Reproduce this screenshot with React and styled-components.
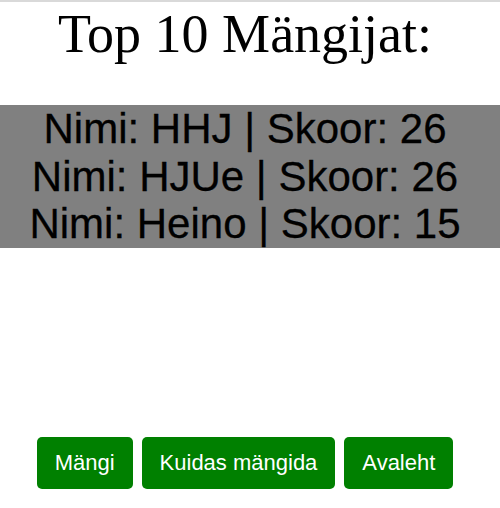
import React from "react";
import styled, { createGlobalStyle } from "styled-components";

const Global = createGlobalStyle`
  html, body { margin: 0; padding: 0; background: #ffffff; }
  body { border-top: 2px solid #d9d9d9; }
`;

const Page = styled.div`
  display: flex;
  flex-direction: column;
  width: 500px;
  min-height: 506px;
`;

const Title = styled.h1`
  margin: 1px 10px 0 0;
  font-family: "Liberation Serif", "Times New Roman", serif;
  font-weight: 400;
  font-size: 54px;
  line-height: 62px;
  text-align: center;
  color: #000;
`;

const Board = styled.div`
  margin-top: 40px;
  background: #808080;
  padding: 0 10px 0 0;
  height: 143px;
  display: flex;
  flex-direction: column;
  justify-content: center;
`;

const Row = styled.div`
  font-family: "Liberation Sans", Arial, sans-serif;
  font-size: 42px;
  line-height: 47.5px;
  text-align: center;
  color: #000;
  -webkit-text-stroke: 0.3px #000;
`;

const Actions = styled.div`
  margin-top: 189px;
  display: flex;
  justify-content: center;
  gap: 9px;
  padding-right: 10px;
`;

const Button = styled.button`
  height: 52px;
  padding: 0 18px;
  border: none;
  border-radius: 5px;
  background: #008000;
  color: #fff;
  font-family: "Liberation Sans", Arial, sans-serif;
  font-size: 22px;
  cursor: pointer;
`;

const players = [
  { name: "HHJ", score: 26 },
  { name: "HJUe", score: 26 },
  { name: "Heino", score: 15 },
];

export default function App() {
  return (
    <>
      <Global />
      <Page>
        <Title>Top 10 Mängijat:</Title>
        <Board>
          {players.map((p) => (
            <Row key={p.name}>
              Nimi: {p.name} | Skoor: {p.score}
            </Row>
          ))}
        </Board>
        <Actions>
          <Button>Mängi</Button>
          <Button>Kuidas mängida</Button>
          <Button>Avaleht</Button>
        </Actions>
      </Page>
    </>
  );
}
